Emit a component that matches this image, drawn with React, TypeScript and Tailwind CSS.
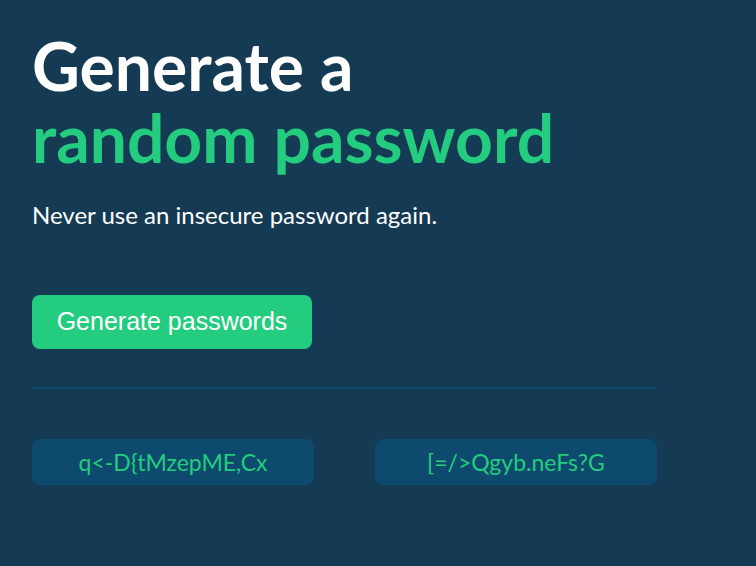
import React from "react";

const PASSWORDS = ["q<-D{tMzepME,Cx", "[=/>Qgyb.neFs?G"];

export default function App() {
  return (
    <div className="min-h-[566px] w-full bg-[#153a54] px-8 pt-[30px] font-['Lato','Noto_Sans',sans-serif]">
      <div className="w-[625px]">
        <h1 className="text-[66px] font-bold leading-[72px] text-white">
          Generate a
          <br />
          <span className="text-[#23cc7e]">random password</span>
        </h1>
        <p className="mt-[27px] text-[24px] leading-7 text-white">
          Never use an insecure password again.
        </p>

        <button className="mt-[66px] h-[54px] w-[280px] rounded-lg bg-[#23cc7e] font-['Liberation_Sans',Arial,sans-serif] text-[25px] text-white">
          Generate passwords
        </button>

        <div className="mt-[38px] h-[2px] w-full bg-[#0e4a6c]" />

        <div className="mt-[50px] flex justify-between">
          {PASSWORDS.map((p) => (
            <div
              key={p}
              className="flex h-[46px] w-[282px] items-center justify-center rounded-lg bg-[#0d4a6e] text-[23px] text-[#23cc7e]"
            >
              {p}
            </div>
          ))}
        </div>
      </div>
    </div>
  );
}
